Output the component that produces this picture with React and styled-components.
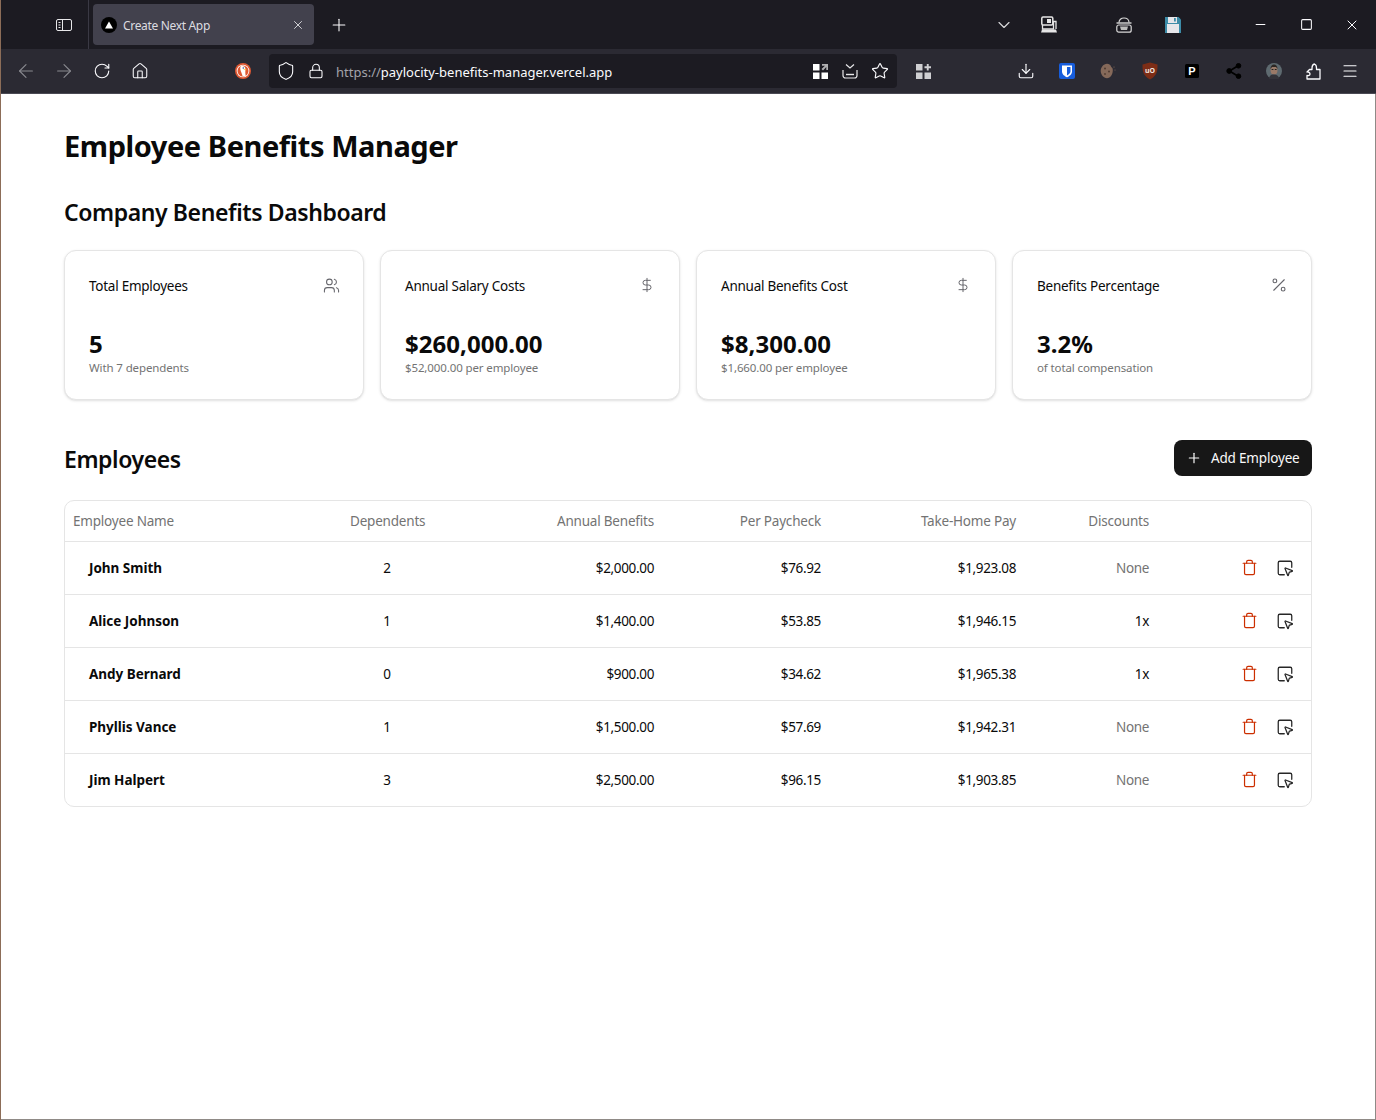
import React from "react";
import styled, { createGlobalStyle } from "styled-components";
import { Users, DollarSign, Percent, Plus, Trash, SquareMousePointer, X, ArrowLeft, ArrowRight, RotateCw, House, Shield, Lock, Star, ChevronDown, Minus, Square, Menu, Download } from "lucide-react";

const Global = createGlobalStyle`
  html, body { margin: 0; padding: 0; background: #fff; }
  * { box-sizing: border-box; }
  body { font-family: "Noto Sans", "Open Sans", sans-serif; color: #0a0a0a; }
`;

const Win = styled.div`
  width: 1376px; height: 1120px; display: flex; flex-direction: column;
  border-left: 1px solid #8c6d58; overflow: hidden;
`;
const TabBar = styled.div`
  height: 49px; background: #1c1b22; display: flex; align-items: center; padding-left: 44px; color: #fbfbfe; flex: none;
`;
const Slot = styled.div`
  width: ${p => p.$w || 38}px; height: 34px; flex: none; display: flex; align-items: center; justify-content: center;
  color: ${p => p.$c || "#fbfbfe"};
`;
const Divider = styled.div`
  width: 1px; height: 49px; background: #3a3944; margin: 0 4px; flex: none;
`;
const Tab = styled.div`
  width: 221px; height: 41px; background: #42414d; border-radius: 4px; display: flex; align-items: center;
  padding-left: 8px; flex: none; color: #dcdce0; font-size: 12px; letter-spacing: -0.33px;
`;
const TabTitle = styled.span`
  margin-left: 6px; padding-top: 2px; flex: 1;
`;
const Push = styled.div` width: ${p => p.$w}px; flex: none; `;
const NavBar = styled.div`
  height: 45px; background: #2b2a33; display: flex; align-items: center; padding-left: 6px; color: #fbfbfe; flex: none;
  border-bottom: 1px solid #4a4953;
`;
const UrlBar = styled.div`
  width: 628px; height: 34px; background: #1c1b22; border-radius: 4px; display: flex; align-items: center; margin-left: 7px; padding: 0 2px; flex: none;
`;
const UrlText = styled.div`
  margin-left: 5px; padding-top: 2px; flex: 1; font-size: 13px; color: #fbfbfe; white-space: nowrap;
`;
const UrlScheme = styled.span` color: #a3a3aa; `;
const Gap = styled.div` width: 7px; flex: none; `;

const Page = styled.main`
  flex: 1; background: #fff; border-right: 1px solid #8f8a86; border-bottom: 1px solid #8f8a86;
  padding: 34px 63px 0;
`;
const Title = styled.h1`
  margin: 0; font-size: 29px; line-height: 36px; font-weight: 700; letter-spacing: -0.44px;
`;
const Heading = styled.h2`
  margin: ${p => p.$top || 0}px 0 0; font-size: 23px; line-height: 32px; font-weight: 600; letter-spacing: -0.4px;
`;
const Cards = styled.div`
  display: grid; grid-template-columns: repeat(4, 1fr); gap: 16px; margin-top: 22px;
`;
const Card = styled.section`
  height: 150px; border: 1px solid #e5e5e5; border-radius: 12px; box-shadow: 0 1px 3px rgba(0,0,0,.1), 0 1px 2px -1px rgba(0,0,0,.1);
  padding: 24px; display: flex; flex-direction: column; background: #fff;
`;
const CardHead = styled.div`
  display: flex; justify-content: space-between; align-items: flex-start; height: 54px;
`;
const CardTitle = styled.div`
  font-size: 13.5px; line-height: 22px; color: #0a0a0a; letter-spacing: -0.25px;
`;
const CardIcon = styled.span`
  width: 16px; height: 16px; margin-top: 2px; display: flex; align-items: center; justify-content: center; color: #66666c;
  svg { flex: none; }
`;
const Value = styled.div`
  font-size: 24px; line-height: 32px; font-weight: 700; letter-spacing: 0.03px;
`;
const Sub = styled.div`
  font-size: 11.5px; line-height: 15px; color: #737373; letter-spacing: -0.12px;
`;
const SectionHead = styled.div`
  display: flex; justify-content: space-between; align-items: center; height: 36px; margin-top: 40px;
`;
const SectionTitle = styled.h2`
  margin: 2px 0 0; font-size: 23px; line-height: 32px; font-weight: 600; letter-spacing: -0.4px;
`;
const AddButton = styled.button`
  width: 138px; height: 36px; background: #171717; color: #fafafa; border: 0; border-radius: 8px; display: flex; align-items: center;
  padding: 0 0 0 12px; gap: 9px; font: inherit; font-size: 13.5px; letter-spacing: -0.18px;
`;
const TableWrap = styled.div`
  margin-top: 24px; border: 1px solid #e5e5e5; border-radius: 10px; overflow: hidden;
`;
const Table = styled.table`
  width: 100%; border-collapse: collapse; table-layout: fixed; font-size: 13.5px;
`;
const Th = styled.th`
  height: 40px; padding: 0 8px; font-weight: 400; color: #737373; text-align: ${p => p.$align || "left"};
  width: ${p => p.$w}px; border-bottom: 1px solid #e5e5e5; letter-spacing: -0.2px;
`;
const Tr = styled.tr`
  height: 53px; border-bottom: 1px solid #e5e5e5;
  &:last-child { border-bottom: 0; }
`;
const Td = styled.td`
  padding: 0 8px; text-align: ${p => p.$align || "left"}; letter-spacing: -0.35px; color: ${p => p.$muted ? "#737373" : "#0a0a0a"};
`;
const NameCell = styled.td`
  padding: 0 8px 0 24px; font-weight: 700; letter-spacing: -0.02px;
`;
const Actions = styled.div`
  display: flex; justify-content: flex-end; align-items: center; gap: 18px; padding-right: 9px;
`;
const IconBtn = styled.span`
  display: flex; color: ${p => p.$danger ? "#cc2f00" : "#262626"};
`;

const SidebarIcon = () => (
  <svg width="16" height="16" viewBox="0 0 16 16" fill="none" stroke="#e8e8ea" strokeWidth="1">
    <rect x=".5" y="2.5" width="15" height="11" rx="1.5" />
    <path d="M6.5 2.5v11M2.5 5.5h2M2.5 8h2M2.5 10.5h2" />
  </svg>
);
const VercelFavicon = () => (
  <svg width="16" height="16" viewBox="0 0 16 16"><circle cx="8" cy="8" r="8" fill="#000" /><path d="M8 4.6l4 6.8H4z" fill="#fff" /></svg>
);
const CamLaptop = () => (
  <svg width="16" height="18" viewBox="0 0 16 18" fill="none">
    <rect x=".8" y="1" width="11" height="8" rx="1.2" stroke="#e6e6e6" strokeWidth="1.5" />
    <rect x="6" y="3" width="4" height="4" fill="#e6e6e6" />
    <path d="M1.5 9v4h11V5.5H15V13" stroke="#e6e6e6" strokeWidth="1.3" />
    <path d="M1 13.5h14l1 3H0z" fill="#e6e6e6" />
  </svg>
);
const Basket = () => (
  <svg width="16" height="16" viewBox="0 0 16 16" fill="none" stroke="#d8d8d8" strokeWidth="1.2">
    <path d="M3 5.500C3 3 5 1 8 1s5 2 5 4.500" />
    <path d="M.5 6h15" strokeWidth="1.4" />
    <rect x=".8" y="8" width="14.400" height="7.200" rx="2" />
    <path d="M4 9.500h8l-1 3.500H5z" fill="#bdbdbd" stroke="none" />
  </svg>
);
const Floppy = () => (
  <svg width="16" height="16" viewBox="0 0 16 16">
    <path d="M0 0h13.500L16 2.500V16H0z" fill="#3d8ca8" />
    <rect x="2" y="7" width="12" height="9" fill="#e6e6ea" />
    <rect x="3" y="0" width="9" height="6" fill="#e6e6ea" />
    <rect x="9" y="1" width="1.800" height="3.500" fill="#3d8ca8" />
  </svg>
);
const Duck = () => (
  <svg width="16" height="16" viewBox="0 0 16 16">
    <circle cx="8" cy="8" r="8" fill="#de5833" />
    <circle cx="8" cy="8" r="6.300" fill="#fff" />
    <circle cx="8" cy="8" r="5.500" fill="#de5833" />
    <path d="M5.500 3.500c2.500-1.200 5 0 5 2.800 0 1.700-.5 3 .2 6.700H7.500C7 10 4.500 7 5.500 3.500z" fill="#fff" />
    <path d="M8 6.500l3.200-.6v1.700z" fill="#f5c33b" />
    <circle cx="8.300" cy="5" r=".8" fill="#2d4f8e" />
  </svg>
);
const QrArrow = () => (
  <svg width="15" height="15" viewBox="0 0 15 15" fill="#fff">
    <rect width="6.500" height="6.500" /><rect y="8.500" width="6.500" height="6.500" /><rect x="8.500" y="8.500" width="6.500" height="6.500" />
    <path d="M9 0h6v6h-1.700V3L10 6.500 8.500 5 12 1.700H9z" opacity=".65" />
  </svg>
);
const InboxDown = () => (
  <svg width="16" height="16" viewBox="0 0 16 16" fill="none" stroke="#e8e8ea" strokeWidth="1.200">
    <path d="M4 1.500l4 3.500 4-3.500" />
    <path d="M1 7v5.500A2.500 2.500 0 0 0 3.500 15h9a2.500 2.500 0 0 0 2.500-2.500V7" />
    <path d="M4 11.500h8" strokeWidth="1.400" />
  </svg>
);
const GridPlus = () => (
  <svg width="15" height="15" viewBox="0 0 15 15" fill="#cfcfd2">
    <rect y="0" width="6.500" height="6.500" /><rect y="8.500" width="6.500" height="6.500" /><rect x="8.500" y="8.500" width="6.500" height="6.500" />
    <path d="M10.800 0h1.900v2.300H15v1.900h-2.300v2.300h-1.900V4.200H8.500V2.300h2.300z" />
  </svg>
);
const Bitwarden = () => (
  <svg width="16" height="16" viewBox="0 0 16 16">
    <rect width="16" height="16" rx="2" fill="#175ddc" />
    <path d="M3 2.500h10v6c0 3-3 4.800-5 5.800-2-1-5-2.800-5-5.800z" fill="#fff" />
    <path d="M8 4h3.500v4.500c0 1.800-2 3-3.500 3.900z" fill="#175ddc" />
  </svg>
);
const Cookie = () => (
  <svg width="16" height="16" viewBox="0 0 16 16">
    <path d="M7 .8c2 0 3.500 1 4 2.700.5 1 1.800 1.200 1.800 3.500 0 4.500-2.300 8.200-5.800 8.200S.7 11.500.7 8 3.500.8 7 .8z" fill="#85695a" />
    <circle cx="5" cy="5.500" r="1" fill="#4f3b31" /><circle cx="9" cy="8.500" r="1" fill="#4f3b31" /><circle cx="5" cy="11" r=".9" fill="#4f3b31" />
    <circle cx="14" cy="4" r=".6" fill="#85695a" /><circle cx="15" cy="7" r=".5" fill="#85695a" />
  </svg>
);
const UBlock = () => (
  <svg width="16" height="18" viewBox="0 0 16 18">
    <path d="M8 .5l7.500 2c0 6 0 11-7.500 15C.5 13.500.5 8.500.5 2.500z" fill="#7d2d16" />
    <text x="8" y="10.500" textAnchor="middle" fontSize="7" fontWeight="700" fill="#f0e6e0" fontFamily="Noto Sans, sans-serif">uO</text>
  </svg>
);
const PBadge = () => (
  <svg width="14" height="14" viewBox="0 0 14 14">
    <rect width="14" height="14" rx="1.500" fill="#000" />
    <text x="7" y="11" textAnchor="middle" fontSize="11" fontWeight="700" fill="#fff" fontFamily="Liberation Sans, sans-serif">P</text>
  </svg>
);
const ShareDark = () => (
  <svg width="16" height="16" viewBox="0 0 16 16" fill="#000" stroke="#000">
    <path d="M12.500 2.500L3.500 8l9 5.500" fill="none" strokeWidth="1.800" />
    <circle cx="12.500" cy="2.800" r="2.300" /><circle cx="3.200" cy="8" r="2.400" /><circle cx="12.500" cy="13.200" r="2.300" />
  </svg>
);
const Avatar = () => (
  <svg width="16" height="16" viewBox="0 0 16 16">
    <circle cx="8" cy="8" r="8" fill="#5e6a70" />
    <ellipse cx="8" cy="7" rx="3.500" ry="4.500" fill="#9a7a68" />
    <path d="M4.500 6c0-3 1.500-4.500 3.500-4.500S11.500 3 11.500 6L10 4H6z" fill="#2b2623" />
    <rect x="5.600" y="6" width="1.800" height="1" fill="#222" /><rect x="8.800" y="6" width="1.800" height="1" fill="#222" />
    <path d="M3 16c0-3 2-4.500 5-4.500s5 1.500 5 4.500z" fill="#33343a" />
  </svg>
);
const PuzzleOutline = () => (
  <svg width="15" height="17" viewBox="0 0 15 17" fill="none" stroke="#fbfbfe" strokeWidth="1.300" strokeLinejoin="round">
    <path d="M1 16h13V6.500H10.500V5c0-1.800-.7-3.500-2-4-1.200.3-2.500 1.800-2.500 4v1.500H3.500L1 9c1.500-.2 3 .500 3 2 0 1.300-1.500 1.800-3 1.500z" />
  </svg>
);

const rows = [
  ["John Smith", "2", "$2,000.00", "$76.92", "$1,923.08", "None"],
  ["Alice Johnson", "1", "$1,400.00", "$53.85", "$1,946.15", "1x"],
  ["Andy Bernard", "0", "$900.00", "$34.62", "$1,965.38", "1x"],
  ["Phyllis Vance", "1", "$1,500.00", "$57.69", "$1,942.31", "None"],
  ["Jim Halpert", "3", "$2,500.00", "$96.15", "$1,903.85", "None"],
];
const cards = [
  ["Total Employees", Users, 17, "5", "With 7 dependents"],
  ["Annual Salary Costs", DollarSign, 16, "$260,000.00", "$52,000.00 per employee"],
  ["Annual Benefits Cost", DollarSign, 16, "$8,300.00", "$1,660.00 per employee"],
  ["Benefits Percentage", Percent, 18, "3.2%", "of total compensation"],
];

export default function App() {
  return (
    <Win>
      <Global />
      <TabBar>
        <Slot><SidebarIcon /></Slot>
        <Push $w={1} />
        <Divider />
        <Tab>
          <VercelFavicon />
          <TabTitle>Create Next App</TabTitle>
          <Slot $w={32} $c="#d0d0d4"><X size={14} strokeWidth={1.7} /></Slot>
        </Tab>
        <Slot $w={50}><Plus size={20} strokeWidth={1.3} /></Slot>
        <Push $w={615} />
        <Slot $w={50} $c="#d8d8da"><ChevronDown size={20} strokeWidth={1.4} /></Slot>
        <Slot $w={40}><CamLaptop /></Slot>
        <Push $w={35} />
        <Slot $w={40}><Basket /></Slot>
        <Slot $w={58}><Floppy /></Slot>
        <Push $w={35} />
        <Slot $w={46}><Minus size={15} strokeWidth={1.6} /></Slot>
        <Slot $w={46}><Square size={13} strokeWidth={1.9} /></Slot>
        <Slot $w={46}><X size={16} strokeWidth={1.5} /></Slot>
      </TabBar>
      <NavBar>
        <Slot $c="#8a8a90"><ArrowLeft size={22} strokeWidth={1.2} /></Slot>
        <Slot $c="#8a8a90"><ArrowRight size={22} strokeWidth={1.2} /></Slot>
        <Slot><RotateCw size={18} strokeWidth={1.5} /></Slot>
        <Slot><House size={18} strokeWidth={1.4} /></Slot>
        <Push $w={65} />
        <Slot><Duck /></Slot>
        <UrlBar>
          <Slot $w={30}><Shield size={20} strokeWidth={1.3} /></Slot>
          <Slot $w={30}><Lock size={16} strokeWidth={1.6} /></Slot>
          <UrlText><UrlScheme>https://</UrlScheme>paylocity-benefits-manager.vercel.app</UrlText>
          <Slot $w={30}><QrArrow /></Slot>
          <Slot $w={30}><InboxDown /></Slot>
          <Slot $w={30}><Star size={18} strokeWidth={1.5} /></Slot>
        </UrlBar>
        <Gap />
        <Slot><GridPlus /></Slot>
        <Push $w={64} />
        <Slot $w={40}><Download size={18} strokeWidth={1.5} /></Slot>
        <Slot $w={41}><Bitwarden /></Slot>
        <Slot $w={42}><Cookie /></Slot>
        <Slot $w={42}><UBlock /></Slot>
        <Slot $w={42}><PBadge /></Slot>
        <Slot $w={41}><ShareDark /></Slot>
        <Slot $w={40}><Avatar /></Slot>
        <Slot $w={38}><PuzzleOutline /></Slot>
        <Slot $w={36}><Menu size={18} strokeWidth={1.5} /></Slot>
      </NavBar>
      <Page>
        <Title>Employee Benefits Manager</Title>
        <Heading $top={32}>Company Benefits Dashboard</Heading>
        <Cards>
          {cards.map(([t, Icon, size, v, s]) => (
            <Card key={t}>
              <CardHead>
                <CardTitle>{t}</CardTitle>
                <CardIcon><Icon size={size} strokeWidth={1.5} /></CardIcon>
              </CardHead>
              <Value>{v}</Value>
              <Sub>{s}</Sub>
            </Card>
          ))}
        </Cards>
        <SectionHead>
          <SectionTitle>Employees</SectionTitle>
          <AddButton><Plus size={16} strokeWidth={1.8} />Add Employee</AddButton>
        </SectionHead>
        <TableWrap>
          <Table>
            <thead>
              <tr>
                <Th $w={277}>Employee Name</Th>
                <Th $w={90}>Dependents</Th>
                <Th $w={230} $align="right">Annual Benefits</Th>
                <Th $w={167} $align="right">Per Paycheck</Th>
                <Th $w={195} $align="right">Take-Home Pay</Th>
                <Th $w={133} $align="right">Discounts</Th>
                <Th $w={154} />
              </tr>
            </thead>
            <tbody>
              {rows.map(r => (
                <Tr key={r[0]}>
                  <NameCell>{r[0]}</NameCell>
                  <Td $align="center">{r[1]}</Td>
                  <Td $align="right">{r[2]}</Td>
                  <Td $align="right">{r[3]}</Td>
                  <Td $align="right">{r[4]}</Td>
                  <Td $align="right" $muted={r[5] === "None"}>{r[5]}</Td>
                  <Td>
                    <Actions>
                      <IconBtn $danger><Trash size={17} strokeWidth={1.7} /></IconBtn>
                      <IconBtn><SquareMousePointer size={18} strokeWidth={1.7} /></IconBtn>
                    </Actions>
                  </Td>
                </Tr>
              ))}
            </tbody>
          </Table>
        </TableWrap>
      </Page>
    </Win>
  );
}
